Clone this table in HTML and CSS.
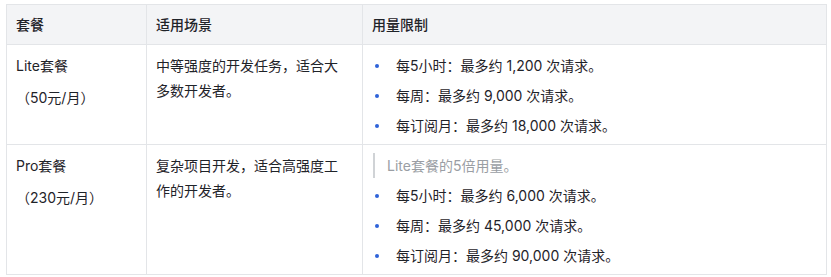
FILE: index.html
```html
<!DOCTYPE html>
<html lang="zh-CN">
<head>
<meta charset="utf-8">
<link rel="stylesheet" href="styles.css">
</head>
<body>
<table class="plans">
  <colgroup>
    <col class="c1"><col class="c2"><col class="c3">
  </colgroup>
  <thead>
    <tr><th>套餐</th><th>适用场景</th><th>用量限制</th></tr>
  </thead>
  <tbody>
    <tr>
      <td><p>Lite套餐</p><p>（50元/月）</p></td>
      <td><p>中等强度的开发任务，适合大多数开发者。</p></td>
      <td>
        <ul>
          <li>每5小时：最多约 1,200 次请求。</li>
          <li>每周：最多约 9,000 次请求。</li>
          <li>每订阅月：最多约 18,000 次请求。</li>
        </ul>
      </td>
    </tr>
    <tr>
      <td><p>Pro套餐</p><p>（230元/月）</p></td>
      <td><p>复杂项目开发，适合高强度工作的开发者。</p></td>
      <td>
        <blockquote>Lite套餐的5倍用量。</blockquote>
        <ul>
          <li>每5小时：最多约 6,000 次请求。</li>
          <li>每周：最多约 45,000 次请求。</li>
          <li>每订阅月：最多约 90,000 次请求。</li>
        </ul>
      </td>
    </tr>
  </tbody>
</table>
</body>
</html>
```
FILE: styles.css
```css
html, body {
  margin: 0;
  background: #ffffff;
}
body {
  padding: 4px 5px 0 6px;
  font-family: "Inter", "Noto Sans CJK SC", sans-serif;
  font-size: 14px;
  color: #1f2329;
}
.plans {
  border-collapse: collapse;
  width: 820px;
  table-layout: fixed;
}
.c1 { width: 140px; }
.c2 { width: 216px; }
.c3 { width: 464px; }
.plans th, .plans td {
  border: 1px solid #e3e5e8;
  text-align: left;
  vertical-align: top;
  padding: 8px 11px 6px 9px;
  line-height: 25px;
}
.plans th {
  background: #f3f4f6;
  font-weight: 500;
  padding-top: 7px;
  padding-bottom: 7px;
}
.plans p {
  margin: 0;
}
.plans td p + p {
  margin-top: 7px;
}
.plans ul {
  list-style: none;
  margin: 0;
  padding: 0;
}
.plans li {
  position: relative;
  padding-left: 24px;
}
.plans li + li {
  margin-top: 5px;
}
.plans li::before {
  content: "";
  position: absolute;
  left: 3px;
  top: 11px;
  width: 4px;
  height: 4px;
  border-radius: 50%;
  background: #2e62d9;
}
.plans blockquote {
  margin: 0 0 5px 1px;
  padding-left: 12px;
  border-left: 2px solid #d0d3d6;
  color: #9a9ea4;
}
```
